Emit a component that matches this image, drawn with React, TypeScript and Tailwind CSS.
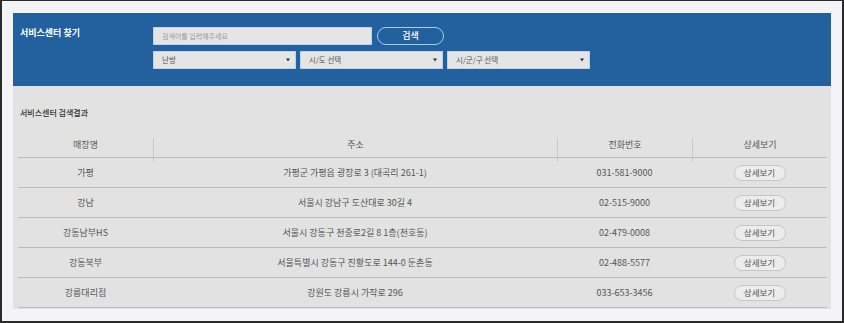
const rows = [
  { name: '가평', addr: '가평군 가평읍 광장로 3 (대곡리 261-1)', tel: '031-581-9000' },
  { name: '강남', addr: '서울시 강남구 도산대로 30길 4', tel: '02-515-9000' },
  { name: '강동남부HS', addr: '서울시 강동구 천중로2길 8 1층(천호동)', tel: '02-479-0008' },
  { name: '강동북부', addr: '서울특별시 강동구 진황도로 144-0 둔촌동', tel: '02-488-5577' },
  { name: '강릉대리점', addr: '강원도 강릉시 가작로 296', tel: '033-653-3456' },
];

function Select({ label }: { label: string }) {
  return (
    <div className="flex h-[18px] w-[143px] items-center justify-between border border-[#b9d3ee] bg-[#e5e5e5] pl-[8px] pr-[5px] text-[7.5px] text-[#555]">
      <span>{label}</span>
      <svg width="4" height="4" viewBox="0 0 4 4">
        <path d="M0 0.5 H4 L2 3.5 Z" fill="#333" />
      </svg>
    </div>
  );
}

export default function App() {
  return (
    <div
      className="h-[323px] w-[844px] border-x-2 border-t border-b-2 border-[#2b2b2b] bg-[#f4f4f6] pl-[11px] pr-[11px] pt-[12px]"
      style={{ fontFamily: '"Noto Sans CJK KR", "Noto Sans", sans-serif' }}
    >
      <div className="flex h-[73px] bg-[#23609e] pl-[7px] pt-[14px]">
        <div className="w-[133px] text-[9px] font-bold leading-[12px] text-white">서비스센터 찾기</div>
        <div className="flex flex-col gap-[6px]">
          <div className="flex gap-[5px]">
            <div className="flex h-[18px] w-[219px] items-center border border-[#b9d3ee] bg-[#e5e5e5] pl-[8px] text-[7px] text-[#9a9a9a]">
              검색어를 입력해주세요
            </div>
            <div className="flex h-[18px] w-[67px] items-center justify-center rounded-full border border-[#a9cdf0] text-[9px] font-medium text-white">
              검색
            </div>
          </div>
          <div className="flex gap-[4px]">
            <Select label="난방" />
            <Select label="시/도 선택" />
            <Select label="시/군/구 선택" />
          </div>
        </div>
      </div>
      <div className="h-[223px] bg-[#e2e2e2] pl-[5px] pr-[4px] pt-[21px]">
        <div className="pl-[2px] text-[8px] font-medium leading-[12px] text-[#333]">서비스센터 검색결과</div>
        <div className="mt-[9px] text-[9px] text-[#555]">
          <div className="grid h-[30px] grid-cols-[135px_404px_135px_1fr] border-b border-[#bcbcbc]">
            <div className="flex items-center justify-center">매장명</div>
            <div className="mt-[10px] flex items-center justify-center border-l border-[#c8c8c8] pb-[10px]">주소</div>
            <div className="mt-[10px] flex items-center justify-center border-l border-[#c8c8c8] pb-[10px]">전화번호</div>
            <div className="mt-[10px] flex items-center justify-center border-l border-[#c8c8c8] pb-[10px]">상세보기</div>
          </div>
          {rows.map((r) => (
            <div key={r.name} className="grid h-[30px] grid-cols-[135px_404px_135px_1fr] border-b border-[#bcbcbc]">
              <div className="flex items-center justify-center">{r.name}</div>
              <div className="flex items-center justify-center">{r.addr}</div>
              <div className="flex items-center justify-center">{r.tel}</div>
              <div className="flex items-center justify-center">
                <div className="flex h-[16px] w-[52px] items-center justify-center rounded-full border border-[#c6c6c6] bg-[#ececec] text-[8.5px] text-[#555]">
                  상세보기
                </div>
              </div>
            </div>
          ))}
        </div>
      </div>
    </div>
  );
}
